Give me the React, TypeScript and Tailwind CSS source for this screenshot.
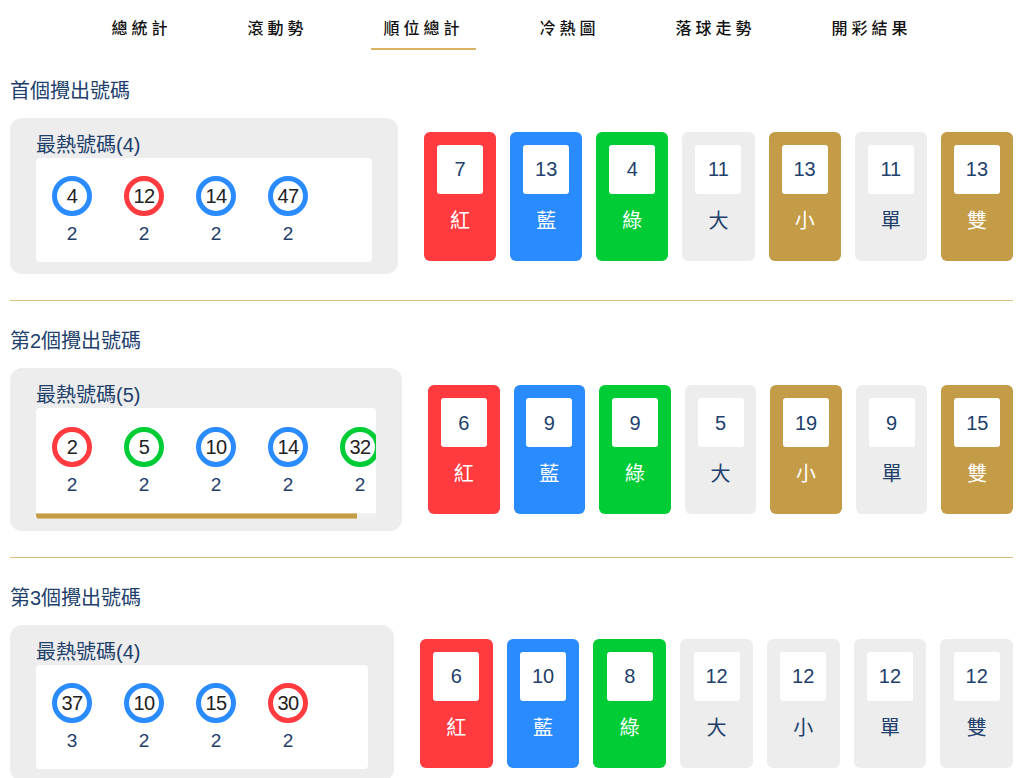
import { type ReactNode } from 'react';

type BallColor = 'red' | 'blue' | 'green';
type CardTone = 'red' | 'blue' | 'green' | 'gray' | 'gold';

interface HotBall {
  num: number;
  color: BallColor;
  count: number;
}

interface StatCard {
  label: string;
  value: number;
  tone: CardTone;
}

interface Section {
  title: string;
  hot: HotBall[];
  stats: StatCard[];
  boxWidth: string;
  scroll?: boolean;
}

const ballRing: Record<BallColor, string> = {
  red: 'border-[#ff3b3f]',
  blue: 'border-[#2a8bff]',
  green: 'border-[#00cc36]',
};

const cardTone: Record<CardTone, string> = {
  red: 'bg-[#ff3b3f] text-white',
  blue: 'bg-[#2a8bff] text-white',
  green: 'bg-[#00cc36] text-white',
  gray: 'bg-[#ededed] text-[#21406b]',
  gold: 'bg-[#c49b47] text-white',
};

const tabs = ['總統計', '滾動勢', '順位總計', '冷熱圖', '落球走勢', '開彩結果'];

const sections: Section[] = [
  {
    title: '首個攪出號碼',
    boxWidth: 'w-[336px]',
    hot: [
      { num: 4, color: 'blue', count: 2 },
      { num: 12, color: 'red', count: 2 },
      { num: 14, color: 'blue', count: 2 },
      { num: 47, color: 'blue', count: 2 },
    ],
    stats: [
      { label: '紅', value: 7, tone: 'red' },
      { label: '藍', value: 13, tone: 'blue' },
      { label: '綠', value: 4, tone: 'green' },
      { label: '大', value: 11, tone: 'gray' },
      { label: '小', value: 13, tone: 'gold' },
      { label: '單', value: 11, tone: 'gray' },
      { label: '雙', value: 13, tone: 'gold' },
    ],
  },
  {
    title: '第2個攪出號碼',
    boxWidth: 'w-[340px]',
    scroll: true,
    hot: [
      { num: 2, color: 'red', count: 2 },
      { num: 5, color: 'green', count: 2 },
      { num: 10, color: 'blue', count: 2 },
      { num: 14, color: 'blue', count: 2 },
      { num: 32, color: 'green', count: 2 },
    ],
    stats: [
      { label: '紅', value: 6, tone: 'red' },
      { label: '藍', value: 9, tone: 'blue' },
      { label: '綠', value: 9, tone: 'green' },
      { label: '大', value: 5, tone: 'gray' },
      { label: '小', value: 19, tone: 'gold' },
      { label: '單', value: 9, tone: 'gray' },
      { label: '雙', value: 15, tone: 'gold' },
    ],
  },
  {
    title: '第3個攪出號碼',
    boxWidth: 'w-[332px]',
    hot: [
      { num: 37, color: 'blue', count: 3 },
      { num: 10, color: 'blue', count: 2 },
      { num: 15, color: 'blue', count: 2 },
      { num: 30, color: 'red', count: 2 },
    ],
    stats: [
      { label: '紅', value: 6, tone: 'red' },
      { label: '藍', value: 10, tone: 'blue' },
      { label: '綠', value: 8, tone: 'green' },
      { label: '大', value: 12, tone: 'gray' },
      { label: '小', value: 12, tone: 'gray' },
      { label: '單', value: 12, tone: 'gray' },
      { label: '雙', value: 12, tone: 'gray' },
    ],
  },
];

function Ball({ num, color, count }: HotBall): ReactNode {
  return (
    <div className="flex w-[72px] shrink-0 flex-col items-center">
      <div
        className={`flex h-10 w-10 items-center justify-center rounded-full border-[5px] bg-white text-[20px] leading-none tracking-[-0.5px] text-[#222] ${ballRing[color]}`}
      >
        {num}
      </div>
      <div className="mt-[6px] text-[19px] leading-6 text-[#21406b]">{count}</div>
    </div>
  );
}

function HotCard({ section }: { section: Section }): ReactNode {
  return (
    <div className="shrink-0 rounded-[12px] bg-[#ededed] px-[26px] pt-[15px] pb-[12px]">
      <div className="text-[20px] leading-6 text-[#21406b]">最熱號碼({section.hot.length})</div>
      <div className={`mt-px overflow-hidden rounded-[4px] bg-white ${section.boxWidth}`}>
        <div className={`flex ${section.scroll ? 'pt-[19px] pb-[16px]' : 'pt-[18px] pb-[16px]'}`}>
          {section.hot.map((b) => (
            <Ball key={b.num} {...b} />
          ))}
        </div>
        {section.scroll && (
          <div className="h-[6px] bg-[#f0f0f0]">
            <div className="h-full w-[321px] border-y border-[#dcc08a] bg-[#c49b47]" />
          </div>
        )}
      </div>
    </div>
  );
}

function StatTile({ label, value, tone }: StatCard): ReactNode {
  return (
    <div className={`flex h-[129px] flex-1 flex-col items-center rounded-[6px] pt-[13px] ${cardTone[tone]}`}>
      <div className="flex h-[49px] w-[46px] items-center justify-center rounded-[3px] bg-white text-[20px] text-[#21406b]">
        {value}
      </div>
      <div className="mt-[13px] text-[20px] leading-7">{label}</div>
    </div>
  );
}

export default function App(): ReactNode {
  return (
    <div className="min-h-screen bg-white font-['Liberation_Sans','Noto_Sans_CJK_TC',sans-serif]">
      {/* Tabs */}
      <nav className="flex justify-center gap-[52px] pt-[17px]">
        {tabs.map((t) => (
          <div
            key={t}
            className={`px-3 pb-[7px] text-[16px] leading-6 font-medium tracking-[4px] text-[#111] ${
              t === '順位總計' ? 'border-b-2 border-[#d8b463]' : 'border-b-2 border-transparent'
            }`}
          >
            {t}
          </div>
        ))}
      </nav>

      <main className="px-[10px] pt-[27px]">
        {sections.map((s, i) => (
          <section key={s.title}>
            {i > 0 && <div className="mt-[26px] mb-[26px] h-px bg-[#dcc07e]" />}
            <h2 className="text-[20px] leading-7 text-[#21406b]">{s.title}</h2>
            <div className="mt-[13px] flex items-center gap-[26px]">
              <HotCard section={s} />
              <div className="flex flex-1 gap-[14px]">
                {s.stats.map((c) => (
                  <StatTile key={c.label} {...c} />
                ))}
              </div>
            </div>
          </section>
        ))}
      </main>
    </div>
  );
}
